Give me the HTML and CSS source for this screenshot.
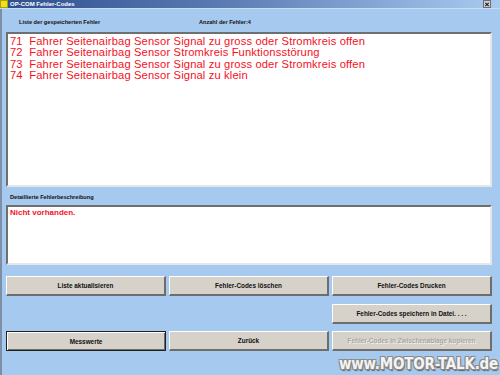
FILE: index.html
```html
<!DOCTYPE html>
<html lang="de">
<head>
<meta charset="utf-8">
<title>OP-COM Fehler-Codes</title>
<link rel="stylesheet" href="styles.css">
</head>
<body>
<div class="window">
  <div class="titlebar">
    <div class="app-icon"></div>
    <div class="title">OP-COM Fehler-Codes</div>
    <div class="close-btn">
      <svg width="7" height="7" viewBox="0 0 7 7"><path d="M1.5 1.5L5.5 5.5M5.5 1.5L1.5 5.5" stroke="#202020" stroke-width="1.2"/></svg>
    </div>
  </div>
  <div class="content">
    <div class="labels">
      <span class="label list-label">Liste der gespeicherten Fehler</span>
      <span class="label count-label">Anzahl der Fehler:4</span>
    </div>
    <div class="listbox">
      <div class="error-line">71&nbsp;&nbsp;Fahrer Seitenairbag Sensor Signal zu gross oder Stromkreis offen</div>
      <div class="error-line">72&nbsp;&nbsp;Fahrer Seitenairbag Sensor Stromkreis Funktionsstörung</div>
      <div class="error-line">73&nbsp;&nbsp;Fahrer Seitenairbag Sensor Signal zu gross oder Stromkreis offen</div>
      <div class="error-line">74&nbsp;&nbsp;Fahrer Seitenairbag Sensor Signal zu klein</div>
    </div>
    <div class="labels detail-labels">
      <span class="label">Detaillierte Fehlerbeschreibung</span>
    </div>
    <div class="detailbox">
      <div class="detail-text">Nicht vorhanden.</div>
    </div>
    <div class="buttons">
      <div class="btn">Liste aktualisieren</div>
      <div class="btn">Fehler-Codes löschen</div>
      <div class="btn">Fehler-Codes Drucken</div>
      <div class="spacer"></div>
      <div class="spacer"></div>
      <div class="btn">Fehler-Codes speichern in Datei. . . .</div>
      <div class="btn default">Messwerte</div>
      <div class="btn">Zurück</div>
      <div class="btn disabled">Fehler-Codes in Zwischenablage kopieren</div>
    </div>
  </div>
  <div class="watermark">www.MOTOR-TALK.de</div>
</div>
</body>
</html>
```
FILE: styles.css
```css
* { box-sizing: border-box; }
html, body { margin: 0; padding: 0; }
body {
  width: 500px;
  height: 375px;
  overflow: hidden;
  font-family: "Liberation Sans", Arial, sans-serif;
}
.window {
  position: relative;
  width: 500px;
  height: 375px;
  background: #a6c9ef;
  border-left: 2px solid #7d8fa6;
  display: flex;
  flex-direction: column;
}
.titlebar {
  height: 9px;
  display: flex;
  align-items: center;
  background: linear-gradient(to right, #2d4f8f 0%, #5b7bb3 45%, #a9cbf0 100%);
  border-bottom: 1px solid #c6dcf4;
  margin-left: -2px;
}
.app-icon {
  width: 8px;
  height: 8px;
  background: #f0e020;
  border: 1px solid #b0a000;
  margin-left: 0;
}
.title {
  color: #ffffff;
  font-size: 6px;
  font-weight: bold;
  margin-left: 2px;
  flex: 1;
}
.close-btn {
  width: 8px;
  height: 8px;
  background: #c8ccd4;
  border: 1px solid #707070;
  margin-right: 9px;
  display: flex;
  align-items: center;
  justify-content: center;
}
.close-btn svg { display: block; }
.content {
  flex: 1;
  padding: 0 6px 0 4px;
  display: flex;
  flex-direction: column;
}
.labels {
  height: 23px;
  display: flex;
  align-items: flex-end;
  padding-bottom: 7px;
}
.label {
  font-size: 5.6px;
  font-weight: bold;
  color: #101010;
}
.list-label { margin-left: 13px; width: 180px; }
.count-label { margin-left: 0; }
.listbox {
  height: 155px;
  width: 486px;
  background: #ffffff;
  border-top: 2px solid #6f6f6f;
  border-left: 2px solid #6f6f6f;
  border-right: 2px solid #e6e6e6;
  border-bottom: 2px solid #e6e6e6;
  padding: 2px 0 0 2px;
}
.error-line {
  color: #f5101e;
  font-size: 11.2px;
  line-height: 11.3px;
  letter-spacing: 0.14px;
  white-space: nowrap;
}
.detail-labels {
  height: 18px;
  padding-bottom: 5px;
  padding-left: 4px;
}
.detailbox {
  height: 60px;
  width: 486px;
  background: #ffffff;
  border-top: 2px solid #6f6f6f;
  border-left: 2px solid #6f6f6f;
  border-right: 2px solid #e6e6e6;
  border-bottom: 2px solid #e6e6e6;
  padding: 1px 0 0 2px;
}
.detail-text {
  color: #f5101e;
  font-size: 8px;
  font-weight: bold;
}
.buttons {
  margin-top: 11px;
  display: grid;
  grid-template-columns: 160px 160px 160px;
  grid-template-rows: 20px 20px 20px;
  column-gap: 3px;
  row-gap: 7.5px;
}
.btn {
  background: #d6d2ca;
  border-top: 1px solid #ffffff;
  border-left: 1px solid #ffffff;
  border-right: 2px solid #6d6d6d;
  border-bottom: 2px solid #6d6d6d;
  display: flex;
  align-items: center;
  justify-content: center;
  font-size: 6.4px;
  font-weight: bold;
  color: #101010;
  white-space: nowrap;
}
.btn.default {
  border: 1px solid #202020;
  box-shadow: inset 1px 1px 0 #ffffff, inset -1px -1px 0 #6d6d6d;
}
.btn.disabled {
  color: #a9a7a2;
  text-shadow: 1px 1px 0 #f2f0ec;
}
.watermark {
  position: absolute;
  right: 2px;
  bottom: 2px;
  font-family: "DejaVu Sans Condensed", "DejaVu Sans", sans-serif;
  font-stretch: condensed;
  font-weight: bold;
  font-size: 15px;
  letter-spacing: -0.2px;
  color: #f4f4f4;
  text-shadow: -1px -1px 0 #8a8a8a, 1px -1px 0 #8a8a8a, -1px 1px 0 #8a8a8a, 1px 1px 0 #8a8a8a, 1px 2px 1px #606060;
}
```
